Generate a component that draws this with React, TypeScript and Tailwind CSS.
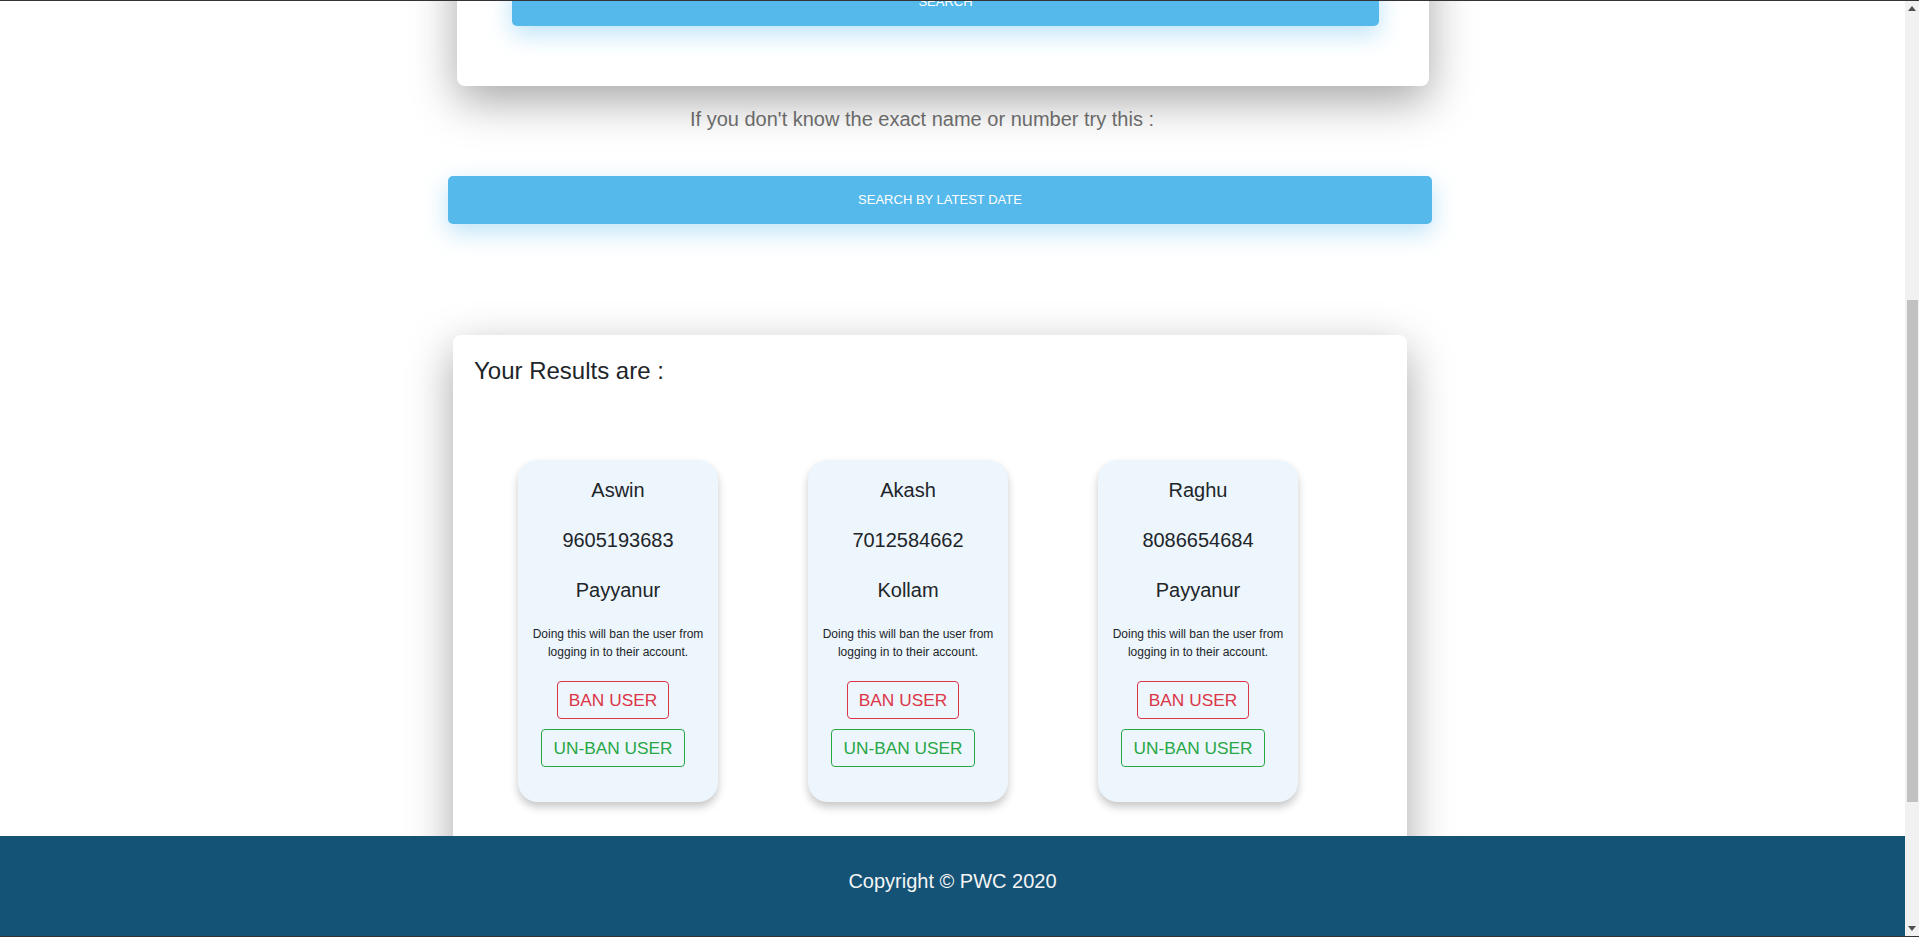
const users = [
  { name: 'Aswin', phone: '9605193683', place: 'Payyanur' },
  { name: 'Akash', phone: '7012584662', place: 'Kollam' },
  { name: 'Raghu', phone: '8086654684', place: 'Payyanur' },
];

function UserCard({ name, phone, place }: { name: string; phone: string; place: string }) {
  return (
    <div className="w-[200px] shrink-0 rounded-[20px] bg-[#edf5fd] pt-[18px] pb-[35px] px-[12px] flex flex-col items-center text-[#212529] shadow-[0_5px_8px_rgba(0,0,0,0.22)]">
      <div className="text-[20px] leading-[24px]">{name}</div>
      <div className="text-[20px] leading-[24px] mt-[26px]">{phone}</div>
      <div className="text-[20px] leading-[24px] mt-[26px]">{place}</div>
      <p className="text-[12px] leading-[18px] text-center mt-[23px]">
        Doing this will ban the user from logging in to their account.
      </p>
      <button className="mt-[20px] mr-[10px] px-[11px] py-[5px] border border-[#dc3545] rounded-[4px] text-[#dc3545] text-[17.3px] leading-[26px]">
        BAN USER
      </button>
      <button className="mt-[10px] mr-[10px] px-[11px] py-[5px] border border-[#28a745] rounded-[4px] text-[#28a745] text-[17.3px] leading-[26px]">
        UN-BAN USER
      </button>
    </div>
  );
}

function Scrollbar() {
  return (
    <div className="w-[14px] shrink-0 bg-[#f1f1f1] flex flex-col">
      <div className="h-[15px] flex items-center justify-center">
        <svg width="8" height="5" viewBox="0 0 8 5">
          <path d="M0 5 L4 0 L8 5 Z" fill="#505050" />
        </svg>
      </div>
      <div className="mt-[284px] ml-[2px] w-[11px] h-[502px] bg-[#c1c1c1]" />
      <div className="flex-1" />
      <div className="h-[15px] flex items-center justify-center">
        <svg width="8" height="5" viewBox="0 0 8 5">
          <path d="M0 0 L8 0 L4 5 Z" fill="#505050" />
        </svg>
      </div>
    </div>
  );
}

export default function App() {
  return (
    <div className="h-[937px] flex flex-col bg-white overflow-hidden border-y border-[#333333] font-['Liberation_Sans',Arial,sans-serif]">
      <div className="flex flex-1 min-h-0">
        <div className="flex-1 min-w-0 flex flex-col">
          <main className="flex-1 min-h-0 overflow-hidden">
            {/* search card, scrolled past */}
            <div className="-mt-[63px] ml-[457px] w-[972px] bg-white rounded-[8px] pt-[40px] pb-[60px] shadow-[0_15px_45px_rgba(0,0,0,0.35)] relative">
              <button className="ml-[55px] w-[867px] h-[48px] rounded-[5px] bg-[#55b9ec] text-white text-[13px] uppercase shadow-[0_8px_24px_rgba(85,185,236,0.4)]">
                Search
              </button>
            </div>

            <div className="mt-[18px] ml-[454px] w-[936px] text-center text-[20px] leading-[30px] text-[#727272]">
              If you don't know the exact name or number try this :
            </div>

            <button className="mt-[42px] ml-[448px] w-[984px] h-[48px] rounded-[5px] bg-[#55b9ec] text-white text-[13px] uppercase shadow-[0_8px_24px_rgba(85,185,236,0.4)]">
              Search by latest date
            </button>

            <div className="mt-[111px] ml-[453px] w-[954px] bg-white rounded-[8px] pt-[21px] pb-[80px] shadow-[0_15px_45px_rgba(0,0,0,0.35)]">
              <h4 className="pl-[21px] text-[24px] leading-[29px] text-[#212529]">Your Results are :</h4>
              <div className="mt-[75px] pl-[65px] flex gap-[90px]">
                {users.map((u) => (
                  <UserCard key={u.name} {...u} />
                ))}
              </div>
            </div>
          </main>
          <footer className="h-[100px] shrink-0 bg-[#145375] pt-[30px] text-center text-[20px] leading-[30px] text-[#f5f5f5]">
            Copyright © PWC 2020
          </footer>
        </div>
        <Scrollbar />
      </div>
    </div>
  );
}
